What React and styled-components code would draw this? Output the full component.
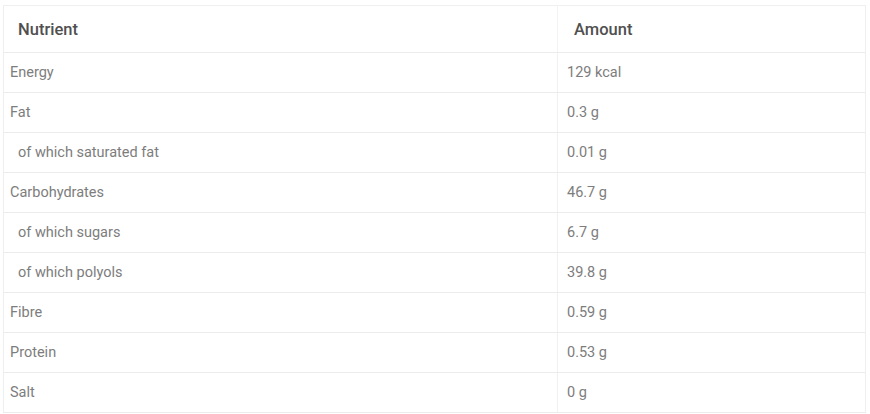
import React from 'react';
import styled, { createGlobalStyle } from 'styled-components';

const GlobalStyle = createGlobalStyle`
  body {
    margin: 0;
    background: #fff;
    font-family: Roboto, "Liberation Sans", sans-serif;
  }
`

const Wrapper = styled.div`
  padding: 5px 4px 0 3px;
`

const Table = styled.table`
  width: 863px;
  border-collapse: collapse;
  border: 1px solid #efefef;
`

const HeadCell = styled.th`
  height: 46px;
  padding: 0 0 0 ${props => props.inset}px;
  text-align: left;
  font-weight: 500;
  font-size: 16.5px;
  color: #505050;
  border-bottom: 1px solid #ececec;
  border-left: ${props => props.divider ? '1px solid #f3f3f3' : 'none'};
`

const Cell = styled.td`
  height: 39px;
  padding: 0 0 0 ${props => props.inset}px;
  font-size: 14.5px;
  color: #7d7d7d;
  border-bottom: 1px solid #ececec;
  border-left: ${props => props.divider ? '1px solid #f1f1f1' : 'none'};
`

const rows = [
  { name: 'Energy', amount: '129 kcal' },
  { name: 'Fat', amount: '0.3 g' },
  { name: 'of which saturated fat', amount: '0.01 g', sub: true },
  { name: 'Carbohydrates', amount: '46.7 g' },
  { name: 'of which sugars', amount: '6.7 g', sub: true },
  { name: 'of which polyols', amount: '39.8 g', sub: true },
  { name: 'Fibre', amount: '0.59 g' },
  { name: 'Protein', amount: '0.53 g' },
  { name: 'Salt', amount: '0 g' },
]

function App() {
  return (
    <Wrapper>
      <GlobalStyle />
      <Table>
        <colgroup>
          <col style={{ width: 554 }} />
          <col />
        </colgroup>
        <thead>
          <tr>
            <HeadCell inset={14}>Nutrient</HeadCell>
            <HeadCell inset={16} divider>Amount</HeadCell>
          </tr>
        </thead>
        <tbody>
          {rows.map(row => (
            <tr key={row.name}>
              <Cell inset={row.sub ? 14 : 6}>{row.name}</Cell>
              <Cell inset={9} divider>{row.amount}</Cell>
            </tr>
          ))}
        </tbody>
      </Table>
    </Wrapper>
  );
}

export default App;
